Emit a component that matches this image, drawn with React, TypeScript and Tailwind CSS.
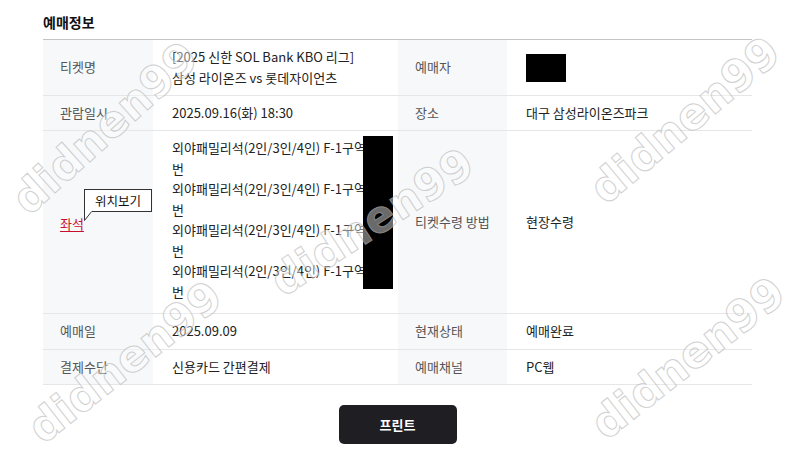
import React from "react";

const font = "font-['Noto_Sans_CJK_KR','Noto_Sans',sans-serif]";

const seatLine = "외야패밀리석(2인/3인/4인) F-1구역";

// watermark stamps laid over the page: [left, top, rotation class]
const marks = [
  { pos: "left-[105px] top-[128px]", rot: "-rotate-[42deg]" },
  { pos: "left-[372px] top-[222px]", rot: "-rotate-[33deg]" },
  { pos: "left-[685px] top-[120px]", rot: "-rotate-[40deg]" },
  { pos: "left-[125px] top-[362px]", rot: "-rotate-[38deg]" },
  { pos: "left-[688px] top-[358px]", rot: "-rotate-[38deg]" },
];

function Label({ children, className = "" }: { children: React.ReactNode; className?: string }) {
  return (
    <div className={`flex items-center bg-[#f7f8fa] pl-[17px] text-[#555] ${className}`}>
      {children}
    </div>
  );
}

function Value({ children, className = "" }: { children: React.ReactNode; className?: string }) {
  return <div className={`flex items-center pl-[19px] text-[#222] ${className}`}>{children}</div>;
}

export default function App() {
  return (
    <div className={`relative h-[463px] w-[800px] overflow-hidden bg-white ${font}`}>
      <div className="pl-[43px] pr-[48px]">
        <h2 className="pt-[13px] pb-[7px] text-[14px] font-bold leading-[19px] text-[#111]">예매정보</h2>

        <div className="grid grid-cols-[110px_245px_109px_245px] border-t border-[#c4c4c4] text-[13px] leading-[20.5px]">
          {/* 티켓명 / 예매자 */}
          <Label className="h-[56px] border-b border-[#e6e6e6]">티켓명</Label>
          <Value className="h-[56px] border-b border-[#e6e6e6]">
            <div>
              <div>[2025 신한 SOL Bank KBO 리그]</div>
              <div>삼성 라이온즈 vs 롯데자이언츠</div>
            </div>
          </Value>
          <Label className="h-[56px] border-b border-[#e6e6e6]">예매자</Label>
          <Value className="h-[56px] border-b border-[#e6e6e6] pl-[17px]">
            <div className="h-[28px] w-[40px] bg-black" />
          </Value>

          {/* 관람일시 / 장소 */}
          <Label className="h-[35px] border-b border-[#e6e6e6]">관람일시</Label>
          <Value className="h-[35px] border-b border-[#e6e6e6]">2025.09.16(화) 18:30</Value>
          <Label className="h-[35px] border-b border-[#e6e6e6]">장소</Label>
          <Value className="h-[35px] border-b border-[#e6e6e6] pl-[18px]">대구 삼성라이온즈파크</Value>

          {/* 좌석 / 티켓수령 방법 */}
          <Label className="relative h-[183px] border-b border-[#e6e6e6]">
            <span className="mt-[4px] text-[#c8102e] underline underline-offset-2">좌석</span>
            <div className="absolute left-[41px] top-[58px] border border-[#333] bg-white px-[10px] text-[12.5px] leading-[21px] text-[#111]">
              위치보기
              <svg className="absolute -bottom-[10px] -left-[1px]" width="10" height="10" viewBox="0 0 10 10">
                <path d="M0.5 0 L0.5 9.5 L8 0" fill="white" stroke="#333" strokeWidth="1" />
                <rect x="1" y="-1" width="7" height="1.5" fill="white" />
              </svg>
            </div>
          </Label>
          <div className="relative h-[183px] border-b border-[#e6e6e6] pl-[19px] pt-[7px] text-[#222]">
            {[0, 1, 2, 3].map((i) => (
              <div key={i}>
                <div>{seatLine}</div>
                <div>번</div>
              </div>
            ))}
            <div className="absolute left-[210px] top-[5px] h-[153px] w-[30px] bg-black" />
          </div>
          <Label className="h-[183px] border-b border-[#e6e6e6]">티켓수령 방법</Label>
          <Value className="h-[183px] border-b border-[#e6e6e6] pl-[18px]">현장수령</Value>

          {/* 예매일 / 현재상태 */}
          <Label className="h-[36px] border-b border-[#e6e6e6]">예매일</Label>
          <Value className="h-[36px] border-b border-[#e6e6e6]">2025.09.09</Value>
          <Label className="h-[36px] border-b border-[#e6e6e6]">현재상태</Label>
          <Value className="h-[36px] border-b border-[#e6e6e6] pl-[18px]">예매완료</Value>

          {/* 결제수단 / 예매채널 */}
          <Label className="h-[35px] border-b border-[#e6e6e6]">결제수단</Label>
          <Value className="h-[35px] border-b border-[#e6e6e6]">신용카드 간편결제</Value>
          <Label className="h-[35px] border-b border-[#e6e6e6]">예매채널</Label>
          <Value className="h-[35px] border-b border-[#e6e6e6] pl-[18px]">PC웹</Value>
        </div>

        <div className="flex justify-center pt-[20px]">
          <button className="h-[39px] w-[118px] rounded-[5px] bg-[#1f1e23] text-[13px] font-bold text-white">
            프린트
          </button>
        </div>
      </div>

      {marks.map((m, i) => (
        <div
          key={i}
          aria-hidden="true"
          className={`pointer-events-none absolute ${m.pos} ${m.rot} -translate-x-1/2 -translate-y-1/2 select-none whitespace-nowrap font-['DejaVu_Sans',sans-serif] text-[44px] font-bold text-white/60 opacity-70 [-webkit-text-stroke:1px_#bdbdbd]`}
        >
          didnen99
        </div>
      ))}
    </div>
  );
}
